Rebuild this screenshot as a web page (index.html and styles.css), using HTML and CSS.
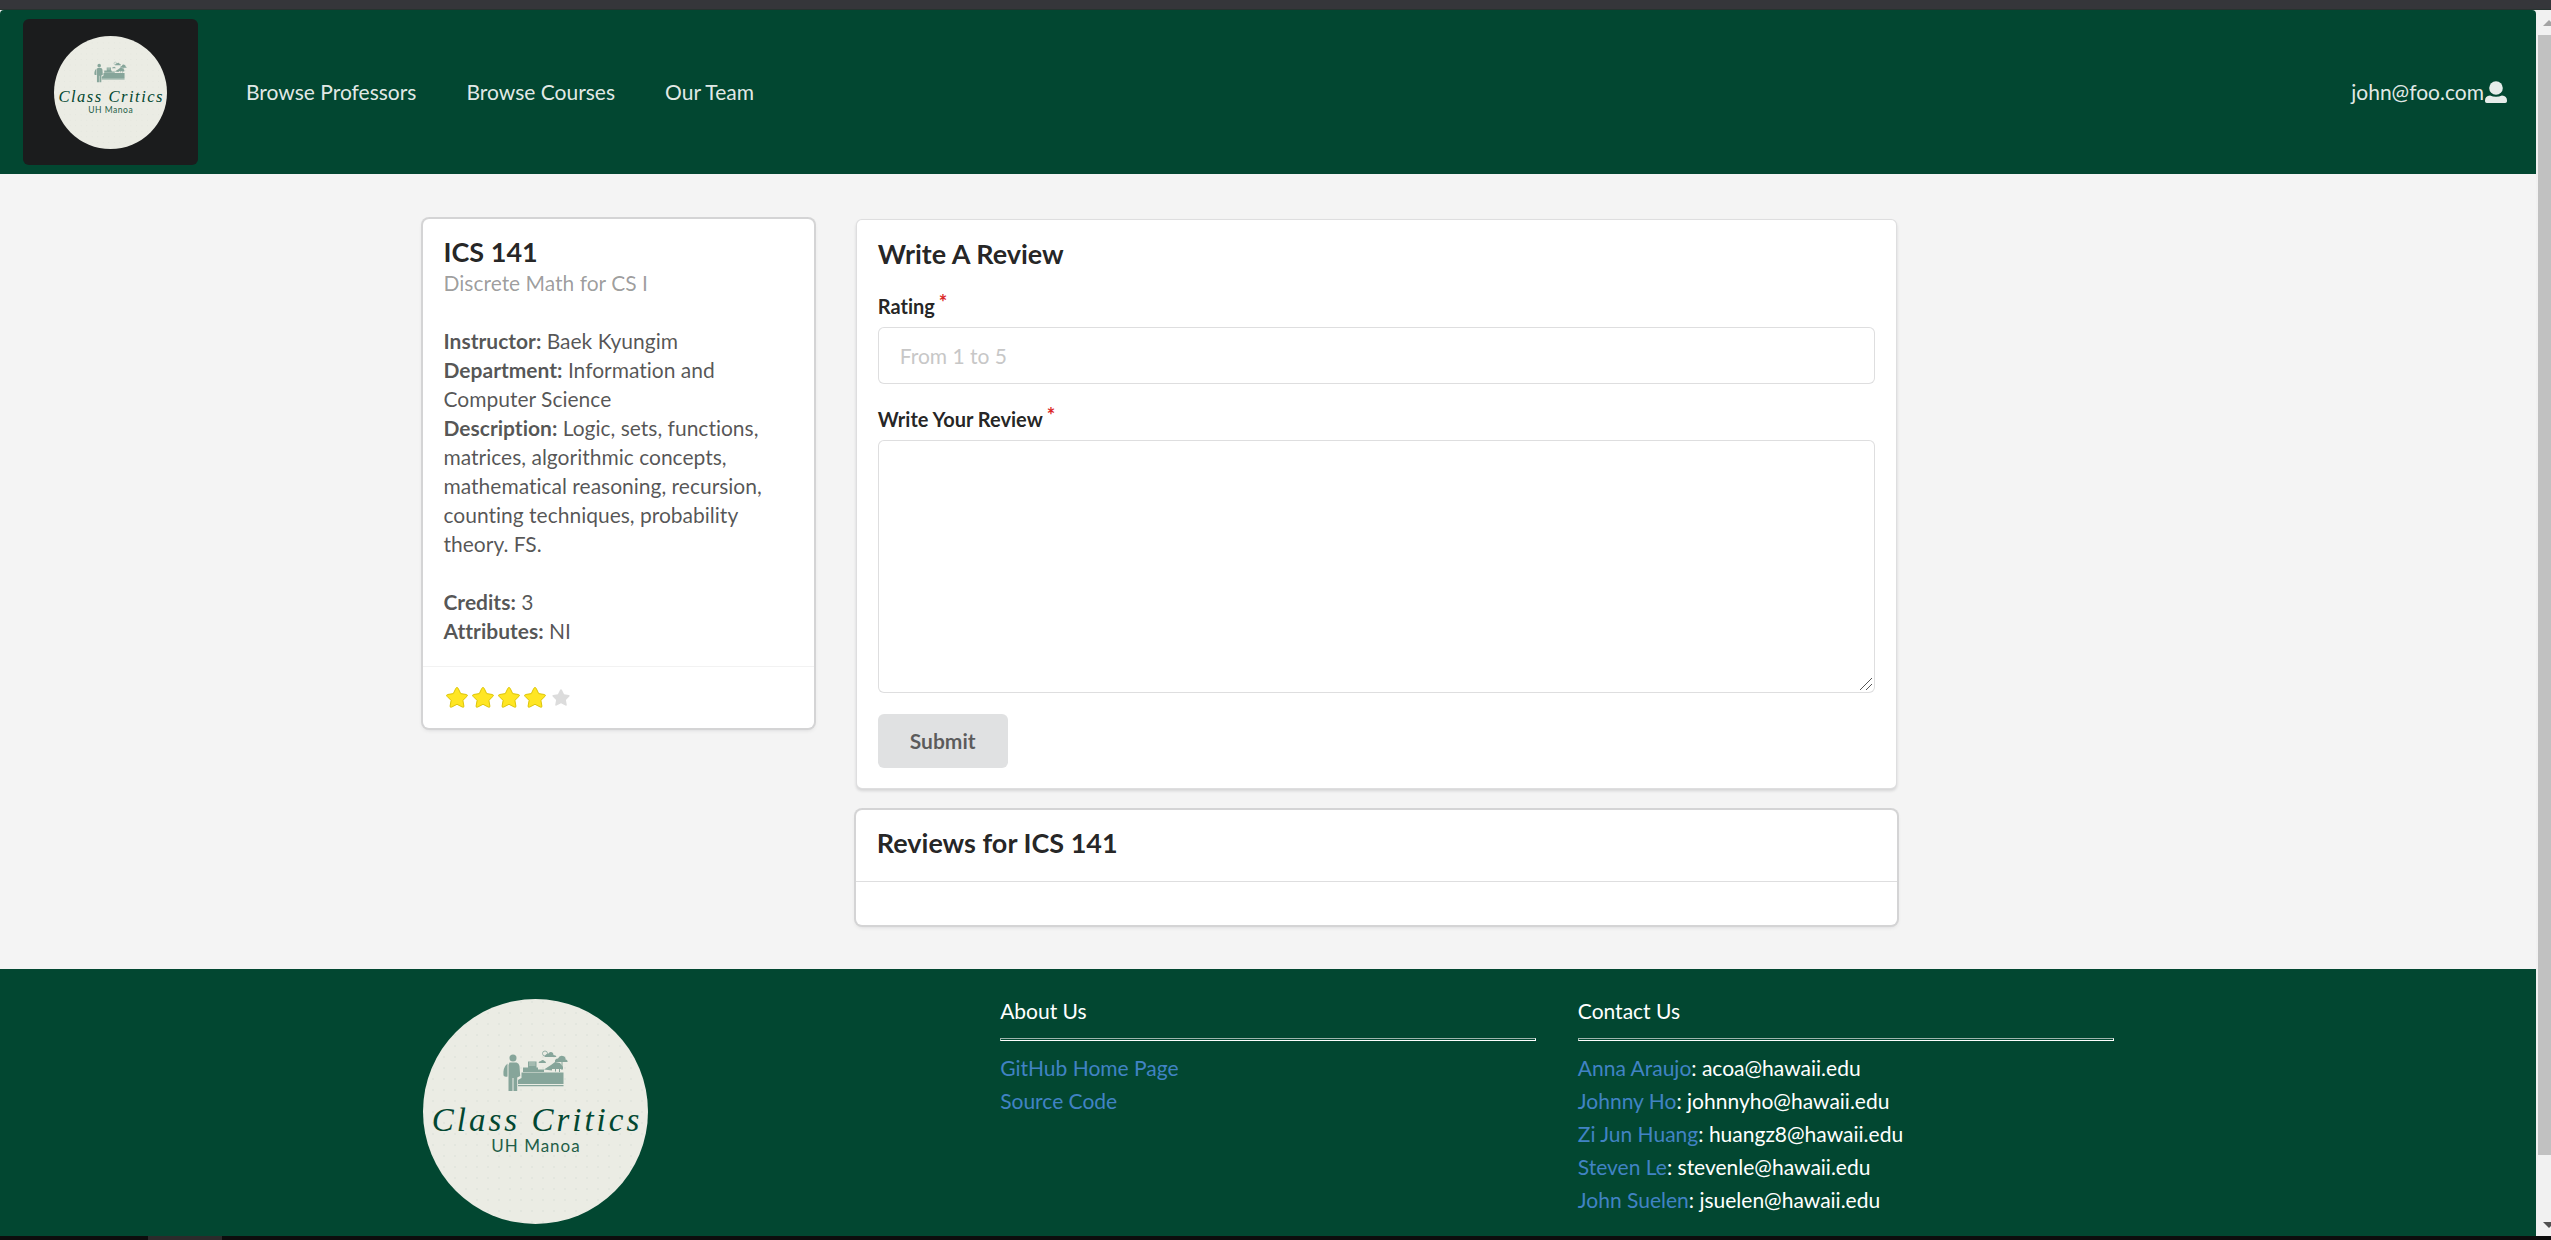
FILE: index.html
```html
<!DOCTYPE html>
<html lang="en">
<head>
<meta charset="utf-8">
<title>Class Critics</title>
<link rel="stylesheet" href="styles.css">
</head>
<body>
<svg class="defs" aria-hidden="true">
  <defs>
    <pattern id="dots" width="11" height="11" patternUnits="userSpaceOnUse"><circle cx="10" cy="3" r="0.7" fill="#d5dbd2"/></pattern>
    <symbol id="logo" viewBox="0 0 225 225">
      <circle cx="112.500" cy="112.500" r="112.500" fill="#ebece4"/>
      <circle cx="112.500" cy="112.500" r="112" fill="url(#dots)"/>
      <g fill="#86a59a">
        <circle cx="90" cy="59" r="3.500"/>
        <path d="M86.500 63.500h7q2.500.5 3 3.500l.7 10-3 1.500V92H90.500V79h-1v13H85.500V66z"/>
        <path d="M84.500 64.500v13q-2.500 1-4-1-.8-8 4-12z"/>
        <path d="M98.500 73.500h42V85H95v-4l3.500-2zM95 86h45.500v1.200H95z"/>
        <path d="M100 68.500h5v-6h8.500v6h1.500v2h6v2.500h-21z"/>
        <path d="M106 64h6.500M106 66h6.500" stroke="#ebece4" stroke-width=".6"/>
        <path d="M121 70.500l7-4.500 4-3 5 1 3 4v2h-3v3h-1v-3h-3v2.500h-1V70h-3v1.500z"/>
        <path d="M132 63q-.5-3.500 3-3.500 1.500-3.500 5-2.500 3 1 2.500 3.500 2.500.5 2 2.500h-5v8h-1v-8z"/>
        <path d="M121.500 58q1-3.500 4-3.500 2-2.500 4.500-.5l.5 2q2.500 0 3 2zM115.500 64q.3-2 2.500-2 1.500-2 3.500 0 1.500.5 1.500 2z"/>
      </g>
      <circle cx="122" cy="54.500" r="2.500" fill="none" stroke="#86a59a" stroke-width=".8"/>
      <text class="logo-name" x="114" y="132" text-anchor="middle">Class Critics</text>
      <text class="logo-place" x="113" y="153" text-anchor="middle">UH Manoa</text>
    </symbol>
    <symbol id="star" viewBox="0 0 24 24"><path d="M12 1.500q.8 0 1.200.9l2.500 5.200 5.700.9q1.800.4.6 1.800l-4.100 4.100 1 5.700q.1 1.700-1.500 1l-5.400-2.800-5.400 2.800q-1.600.7-1.500-1l1-5.700L2 10.300q-1.200-1.400.6-1.800l5.700-.9 2.500-5.200q.4-.9 1.200-.9z"/></symbol>
  </defs>
</svg>
<div class="browser-edge"></div>
<div class="viewport">
  <div class="page">
    <header class="navbar">
      <a class="brand" href="#"><svg class="brand-logo" role="img" aria-label="Class Critics"><use href="#logo"/></svg></a>
      <nav class="nav-links">
        <a href="#">Browse Professors</a>
        <a href="#">Browse Courses</a>
        <a href="#">Our Team</a>
      </nav>
      <a class="account" href="#">john@foo.com<svg class="user-icon" viewBox="0 0 22 22" aria-hidden="true"><circle cx="11" cy="7" r="6.800"/><path d="M5 14.500q6 2.500 12 0 5 .5 5 5v.7q0 1.800-1.800 1.800H1.800Q0 22 0 20.200v-.7q0-4.500 5-5z"/></svg></a>
    </header>

    <main class="container course">
      <article class="card course-card">
        <div class="card-body">
          <h2 class="title">ICS 141</h2>
          <p class="meta">Discrete Math for CS I</p>
          <div class="description">
            <p><b>Instructor:</b> Baek Kyungim</p>
            <p><b>Department:</b> Information and Computer Science</p>
            <p><b>Description:</b> Logic, sets, functions, matrices, algorithmic concepts, mathematical reasoning, recursion, counting techniques, probability theory. FS.</p>
            <p class="spaced"><b>Credits:</b> 3</p>
            <p><b>Attributes:</b> NI</p>
          </div>
        </div>
        <div class="rating" role="img" aria-label="4 of 5 stars">
          <svg class="star on"><use href="#star"/></svg>
          <svg class="star on"><use href="#star"/></svg>
          <svg class="star on"><use href="#star"/></svg>
          <svg class="star on"><use href="#star"/></svg>
          <svg class="star"><use href="#star"/></svg>
        </div>
      </article>

      <div class="reviews">
        <form class="segment">
          <h2 class="title">Write A Review</h2>
          <div class="field">
            <label for="rating">Rating<span class="required">*</span></label>
            <input id="rating" type="text" placeholder="From 1 to 5">
          </div>
          <div class="field">
            <label for="review">Write Your Review<span class="required">*</span></label>
            <textarea id="review"></textarea>
          </div>
          <button class="submit" type="button">Submit</button>
        </form>
        <section class="card">
          <h2 class="title list-title">Reviews for ICS 141</h2>
          <div class="list"></div>
        </section>
      </div>
    </main>

    <footer class="footer">
      <div class="container footer-grid">
        <svg class="footer-logo" role="img" aria-label="Class Critics"><use href="#logo"/></svg>
        <section>
          <h3>About Us</h3>
          <hr>
          <ul>
            <li><a href="#">GitHub Home Page</a></li>
            <li><a href="#">Source Code</a></li>
          </ul>
        </section>
        <section>
          <h3>Contact Us</h3>
          <hr>
          <ul>
            <li><a href="#">Anna Araujo</a>: acoa@hawaii.edu</li>
            <li><a href="#">Johnny Ho</a>: johnnyho@hawaii.edu</li>
            <li><a href="#">Zi Jun Huang</a>: huangz8@hawaii.edu</li>
            <li><a href="#">Steven Le</a>: stevenle@hawaii.edu</li>
            <li><a href="#">John Suelen</a>: jsuelen@hawaii.edu</li>
          </ul>
        </section>
      </div>
    </footer>
  </div>
  <div class="scrollbar" aria-hidden="true">
    <svg class="arrow" viewBox="0 0 15 25"><path d="M7 16l6-6 6 6z" fill="#a3a3a3"/></svg>
    <div class="thumb"></div>
    <svg class="arrow" viewBox="0 0 15 25"><path d="M7 11h12l-6 6z" fill="#505050"/></svg>
  </div>
</div>
<div class="taskbar"><div class="taskbar-item"></div></div>
</body>
</html>
```
FILE: styles.css
```css
* { box-sizing: border-box; }

body {
  margin: 0;
  min-height: 100vh;
  display: flex;
  flex-direction: column;
  background: #f4f4f4;
  color: rgba(0, 0, 0, .87);
  font: 21px/30px Lato, "Liberation Sans", sans-serif;
  font-variant-ligatures: none;
}

h2, h3, p, ul { margin: 0; padding: 0; }
ul { list-style: none; }
a { color: #4183c4; text-decoration: none; }

.defs { position: absolute; width: 0; height: 0; }
.logo-name {
  font: italic 33px "Liberation Serif", serif;
  letter-spacing: 3px;
  fill: #024731;
}
.logo-place {
  font: 17px Lato, sans-serif;
  letter-spacing: 1px;
  fill: #1f5e48;
}

.browser-edge { height: 10px; background: #35363a; border-bottom: 1px solid #26332f; }
.viewport { flex: 1; display: flex; }
.page { flex: 1; display: flex; flex-direction: column; }

/* Top navigation */
.navbar {
  display: flex;
  align-items: center;
  padding: 9px 29px 9px 23px;
  background: #024731;
  border-radius: 4px 4px 0 0;
}
.brand {
  display: flex;
  padding: 17px 31px 16px;
  border-radius: 6px;
  background: #1b1c1d;
}
.brand-logo { width: 113px; height: 113px; }
.nav-links { display: flex; gap: 50px; margin-left: 48px; }
.nav-links a, .account { color: rgba(255, 255, 255, .9); }
.account { display: flex; align-items: center; gap: 1px; margin-left: auto; }
.user-icon { width: 22px; height: 22px; fill: currentColor; }

/* Layout */
.container { width: 100%; max-width: 1691px; margin: 0 auto; }
.course {
  flex: 1;
  display: grid;
  grid-template-columns: repeat(16, 1fr);
  column-gap: 42px;
  align-items: start;
  padding: 45px 0 42px;
}
.course-card { grid-column: span 4; }
.reviews { grid-column: span 10; display: grid; gap: 21px; }

.card, .segment { background: #fff; border-radius: 6px; }
.card { box-shadow: 0 2px 4px #d4d4d5, 0 0 0 2px #d4d4d5; }
.segment {
  padding: 18px 21px 20px;
  border: 1px solid rgba(34, 36, 38, .15);
  box-shadow: 0 2px 3px rgba(34, 36, 38, .15);
}
.title { font-size: 27px; line-height: 32px; font-weight: 700; }

/* Course summary */
.card-body { padding: 17px 21px 21px; }
.meta { color: rgba(0, 0, 0, .4); }
.description { padding-top: 28px; line-height: 29px; color: rgba(0, 0, 0, .68); }
.spaced { margin-top: 29px; }
.rating {
  display: flex;
  gap: 2px;
  padding: 19px 22px 18px;
  border-top: 1px solid rgba(0, 0, 0, .05);
}
.star { width: 24px; height: 24px; padding: 2px; fill: #dcdcdc; }
.star.on {
  padding: 0;
  fill: #ffe623;
  stroke: #ddc507;
  stroke-width: 1px;
  stroke-linejoin: round;
}

/* Review form */
.field { display: grid; gap: 6px; margin-bottom: 21px; }
.title + .field { margin-top: 22px; }
label { font-size: 20px; line-height: 29px; font-weight: 700; }
.required { margin-left: 4px; color: #db2828; vertical-align: top; line-height: 20px; }
input, textarea {
  width: 100%;
  padding: 13px 21px;
  border: 1px solid rgba(34, 36, 38, .15);
  border-radius: 6px;
  background: #fff;
  color: inherit;
  font: inherit;
}
input { height: 57px; }
textarea { height: 253px; resize: vertical; }
textarea::-webkit-resizer {
  background: url("data:image/svg+xml,%3Csvg xmlns='http://www.w3.org/2000/svg' viewBox='0 0 15 15'%3E%3Cpath d='M1 13L13 1M7 13l6-6' stroke='%23555'/%3E%3C/svg%3E") no-repeat;
}
input::placeholder { color: #c7c7c7; }
.submit {
  display: block;
  padding: 12px 32px;
  border: 0;
  border-radius: 6px;
  background: #e0e1e2;
  color: rgba(0, 0, 0, .6);
  font: 700 21px/30px Lato, sans-serif;
}
.list-title { padding: 17px 21px 22px; }
.list { height: 44px; border-top: 1px solid rgba(34, 36, 38, .15); }

/* Footer */
.footer { padding: 30px 0 12px; background: #024731; color: #fff; }
.footer-grid { display: grid; grid-template-columns: repeat(3, 1fr); column-gap: 42px; }
.footer-logo { width: 225px; height: 225px; }
.footer h3 { font-size: 21px; line-height: 24px; font-weight: 400; }
.footer hr {
  height: 3px;
  margin: 15px 0 10px;
  border: 1px solid #fff;
  border-top-color: #9fb5ad;
  border-left-color: #9fb5ad;
}
.footer li { line-height: 33px; }

/* Window edges */
.scrollbar { width: 15px; display: flex; flex-direction: column; background: #f1f1f1; }
.arrow { width: 15px; height: 25px; }
.thumb { flex: 1; margin: 0 0 56px 2px; background: #c1c1c1; }
.taskbar { height: 4px; padding-left: 148px; background: #0d0d0d; }
.taskbar-item { width: 74px; height: 4px; background: #2b2b2b; }
```
